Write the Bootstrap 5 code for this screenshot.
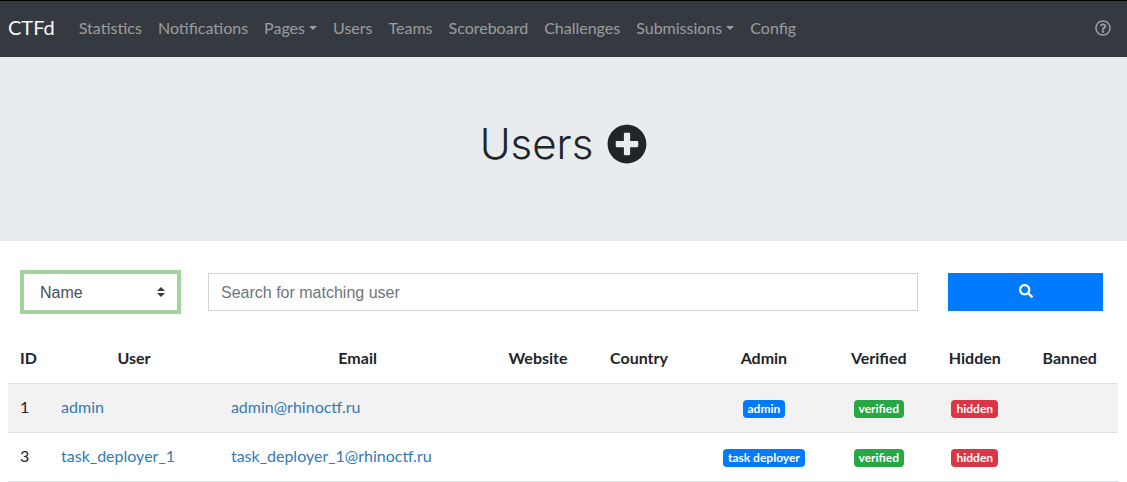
<!DOCTYPE html>
<html lang="en">
<head>
<meta charset="utf-8">
<meta name="viewport" content="width=device-width, initial-scale=1">
<title>CTFd - Users</title>
<link href="https://cdn.jsdelivr.net/npm/bootstrap@5.3.0/dist/css/bootstrap.min.css" rel="stylesheet">
<style>
  body { font-family: Lato, sans-serif; font-size: 16px; color: #212529; }
  .topbar { background: #343a40; border-top: 1px solid #000; padding: 7px 8px 9px; }
  .topbar .navbar-brand { font-size: 20px; line-height: 30px; padding: 4px 0 6px; margin-right: 16px; }
  .topbar { --bs-navbar-color: rgba(255, 255, 255, .5); --bs-navbar-hover-color: rgba(255, 255, 255, .75); }
  .hero { background: #e9ecef; padding: 63px 16px 73px; }
  .hero h1 { font-family: Inter, sans-serif; font-weight: 300; font-size: 42px; line-height: 48px; gap: 14px; }
  .hero a { color: #212529; }
  .users-page { padding: 32px 9px 0 8px; }
  .search-row { --bs-gutter-x: 30px; margin: 0 0 24px; }
  .search-row .form-select, .search-row .form-control {
    font-family: "Liberation Sans", sans-serif; height: 38px; border-radius: 0; border-color: #ced4da; color: #495057;
    padding-top: 7px; padding-bottom: 5px;
  }
  .search-row .form-control::placeholder { color: #6c757d; }
  .search-row .form-select {
    padding-left: 16px; padding-right: 28px; border-color: #a3d39c; box-shadow: 0 0 0 3px #a3d39c;
    background-image: url("data:image/svg+xml,%3csvg xmlns='http://www.w3.org/2000/svg' viewBox='0 0 4 5'%3e%3cpath fill='%23343a40' d='M2 0L0 2h4zm0 5L0 3h4z'/%3e%3c/svg%3e");
    background-size: 8px 10px; background-position: right 12px center;
  }
  .btn-search { --bs-btn-bg: #007bff; --bs-btn-border-color: #007bff; height: 38px; border-radius: 0; }
  .btn-search svg { margin-top: -6px; }
  .users-table { --bs-table-striped-bg: #f2f2f2; --bs-table-color: #212529; table-layout: fixed; border-color: #dee2e6; }
  .users-table > :not(caption) > * > * { padding: 11px 12px 13px; line-height: 24px; }
  .users-table a { color: #337ab7; text-decoration: none; }
  .users-table .badge { font-size: 12px; line-height: 12px; padding: 3px 5px; border-radius: 4px; vertical-align: baseline; }
  .tag-blue { background: #007bff; }
  .tag-green { background: #28a745; }
  .tag-red { background: #dc3545; }
  .w-id { width: 3.7%; } .w-user { width: 15.3%; } .w-email { width: 25%; }
  .w-site { width: 7.5%; } .w-country { width: 10.7%; } .w-admin { width: 11.8%; }
  .w-verified { width: 8.9%; } .w-hidden { width: 8.4%; } .w-banned { width: 8.7%; }
</style>
</head>
<body>
<nav class="navbar navbar-expand-md topbar" data-bs-theme="dark">
  <a class="navbar-brand" href="#">CTFd</a>
  <button class="navbar-toggler" type="button" data-bs-toggle="collapse" data-bs-target="#mainNav" aria-label="Toggle navigation"><span class="navbar-toggler-icon"></span></button>
  <div class="collapse navbar-collapse" id="mainNav">
    <ul class="navbar-nav me-auto">
      <li class="nav-item"><a class="nav-link" href="#">Statistics</a></li>
      <li class="nav-item"><a class="nav-link" href="#">Notifications</a></li>
      <li class="nav-item dropdown"><a class="nav-link dropdown-toggle" href="#" role="button" data-bs-toggle="dropdown">Pages</a></li>
      <li class="nav-item"><a class="nav-link" href="#">Users</a></li>
      <li class="nav-item"><a class="nav-link" href="#">Teams</a></li>
      <li class="nav-item"><a class="nav-link" href="#">Scoreboard</a></li>
      <li class="nav-item"><a class="nav-link" href="#">Challenges</a></li>
      <li class="nav-item dropdown"><a class="nav-link dropdown-toggle" href="#" role="button" data-bs-toggle="dropdown">Submissions</a></li>
      <li class="nav-item"><a class="nav-link" href="#">Config</a></li>
    </ul>
    <ul class="navbar-nav">
      <li class="nav-item"><a class="nav-link d-flex align-items-center" href="#" aria-label="Help">
        <svg width="16" height="16" viewBox="0 0 512 512" fill="currentColor"><path d="M256 8C119 8 8 119.100 8 256c0 137 111 248 248 248s248-111 248-248C504 119.100 393 8 256 8zm0 448c-110.500 0-200-89.400-200-200 0-110.500 89.500-200 200-200 110.500 0 200 89.500 200 200 0 110.500-89.400 200-200 200zm107.200-255.200c0 67.100-72.400 68.100-72.400 92.900V300c0 6.600-5.400 12-12 12h-45.700c-6.600 0-12-5.400-12-12v-8.700c0-35.700 27.100-50 47.600-61.500 17.600-9.800 28.300-16.500 28.300-29.600 0-17.200-22-28.700-39.800-28.700-23.200 0-33.900 11-49 30-4 5.100-11.500 6-16.700 2.100l-27.800-21.100c-5.100-3.900-6.300-11.100-2.600-16.400C184.800 131.500 214.900 112 261.800 112c49 0 101.500 38.300 101.500 88.800zM298 368c0 23.200-18.800 42-42 42s-42-18.800-42-42 18.800-42 42-42 42 18.800 42 42z"/></svg>
      </a></li>
    </ul>
  </div>
</nav>

<main>
  <header class="hero">
    <h1 class="d-flex justify-content-center align-items-center mb-0">Users
      <a class="d-flex" href="#" aria-label="New user"><svg width="40" height="40" viewBox="0 0 512 512" fill="currentColor"><path d="M256 8C119 8 8 119 8 256s111 248 248 248 248-111 248-248S393 8 256 8zm144 276c0 6.600-5.400 12-12 12h-92v92c0 6.600-5.400 12-12 12h-56c-6.600 0-12-5.400-12-12v-92h-92c-6.600 0-12-5.400-12-12v-56c0-6.600 5.400-12 12-12h92v-92c0-6.600 5.400-12 12-12h56c6.600 0 12 5.400 12 12v92h92c6.600 0 12 5.400 12 12v56z"/></svg></a>
    </h1>
  </header>

  <div class="users-page">
    <form class="row search-row">
      <div class="col-2">
        <select class="form-select" aria-label="Search field">
          <option>Name</option><option>ID</option><option>Email</option>
        </select>
      </div>
      <div class="col-8"><input type="text" class="form-control" placeholder="Search for matching user" aria-label="Search for matching user"></div>
      <div class="col-2">
        <button type="submit" class="btn btn-primary btn-search w-100" aria-label="Search">
          <svg width="14" height="14" viewBox="0 0 512 512" fill="currentColor"><path d="M505 442.700L405.300 343c-4.500-4.500-10.600-7-17-7H372c27.600-35.300 44-79.700 44-128C416 93.100 322.900 0 208 0S0 93.100 0 208s93.100 208 208 208c48.300 0 92.700-16.400 128-44v16.300c0 6.400 2.500 12.500 7 17l99.700 99.700c9.400 9.400 24.600 9.400 33.900 0l28.300-28.300c9.400-9.400 9.400-24.600.1-34zM208 336c-70.700 0-128-57.200-128-128 0-70.700 57.200-128 128-128 70.700 0 128 57.200 128 128 0 70.700-57.200 128-128 128z"/></svg>
        </button>
      </div>
    </form>

    <table class="table table-striped users-table mb-0">
      <thead>
        <tr>
          <th class="w-id">ID</th>
          <th class="w-user text-center">User</th>
          <th class="w-email text-center">Email</th>
          <th class="w-site text-center">Website</th>
          <th class="w-country text-center">Country</th>
          <th class="w-admin text-center">Admin</th>
          <th class="w-verified text-center">Verified</th>
          <th class="w-hidden text-center">Hidden</th>
          <th class="w-banned text-center">Banned</th>
        </tr>
      </thead>
      <tbody>
        <tr>
          <td>1</td>
          <td><a href="#">admin</a></td>
          <td><a href="#">admin@rhinoctf.ru</a></td>
          <td></td>
          <td></td>
          <td class="text-center"><span class="badge tag-blue">admin</span></td>
          <td class="text-center"><span class="badge tag-green">verified</span></td>
          <td class="text-center"><span class="badge tag-red">hidden</span></td>
          <td></td>
        </tr>
        <tr>
          <td>3</td>
          <td><a href="#">task_deployer_1</a></td>
          <td><a href="#">task_deployer_1@rhinoctf.ru</a></td>
          <td></td>
          <td></td>
          <td class="text-center"><span class="badge tag-blue">task deployer</span></td>
          <td class="text-center"><span class="badge tag-green">verified</span></td>
          <td class="text-center"><span class="badge tag-red">hidden</span></td>
          <td></td>
        </tr>
      </tbody>
    </table>
  </div>
</main>
<script src="https://cdn.jsdelivr.net/npm/bootstrap@5.3.0/dist/js/bootstrap.bundle.min.js"></script>
</body>
</html>
